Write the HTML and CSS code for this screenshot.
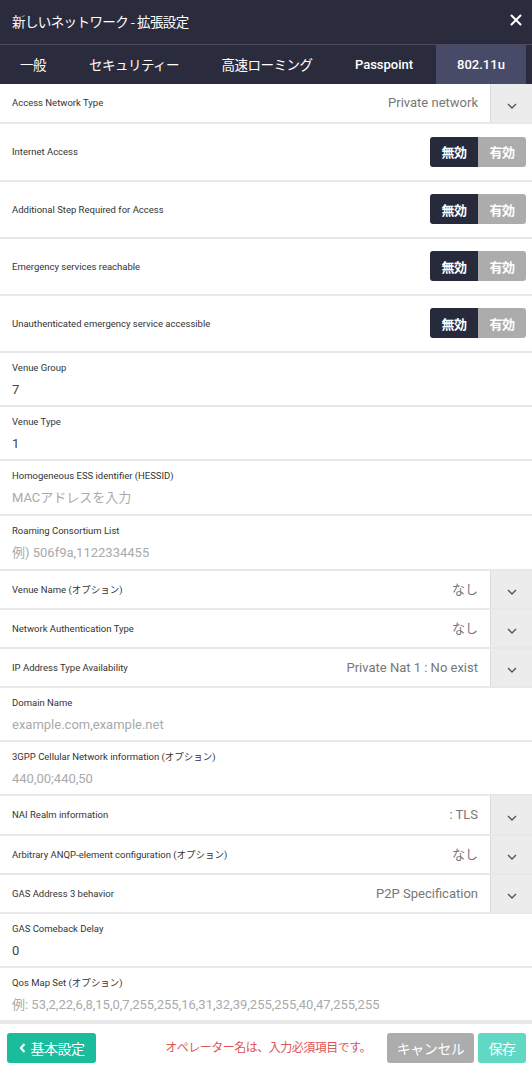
FILE: index.html
```html
<!DOCTYPE html>
<html lang="ja">
<head>
<meta charset="utf-8">
<link rel="stylesheet" href="styles.css">
</head>
<body>
<div class="modal">
  <header class="header">
    <div class="title">新しいネットワーク - 拡張設定</div>
    <div class="close">
      <svg width="12" height="12" viewBox="0 0 12 12"><path d="M1.5 1.5 L10.5 10.5 M10.5 1.5 L1.5 10.5" stroke="#fff" stroke-width="2" stroke-linecap="round"/></svg>
    </div>
  </header>
  <nav class="tabs">
    <div class="tab t1">一般</div>
    <div class="tab t2">セキュリティー</div>
    <div class="tab t3">高速ローミング</div>
    <div class="tab t4 latin">Passpoint</div>
    <div class="tab t5 latin active">802.11u</div>
  </nav>
  <main class="body">
    <div class="row sel first">
      <div class="label">Access Network Type</div>
      <div class="val">Private network</div>
      <div class="btn"><svg width="10" height="6" viewBox="0 0 10 6"><path d="M1 1 L5 5 L9 1" fill="none" stroke="#555" stroke-width="1.4"/></svg></div>
    </div>
    <div class="row tog firsttog">
      <div class="label">Internet Access</div>
      <div class="toggle"><span class="off">無効</span><span class="on">有効</span></div>
    </div>
    <div class="row tog">
      <div class="label">Additional Step Required for Access</div>
      <div class="toggle"><span class="off">無効</span><span class="on">有効</span></div>
    </div>
    <div class="row tog">
      <div class="label">Emergency services reachable</div>
      <div class="toggle"><span class="off">無効</span><span class="on">有効</span></div>
    </div>
    <div class="row tog">
      <div class="label">Unauthenticated emergency service accessible</div>
      <div class="toggle"><span class="off">無効</span><span class="on">有効</span></div>
    </div>
    <div class="row inp">
      <div class="label">Venue Group</div>
      <div class="text">7</div>
    </div>
    <div class="row inp">
      <div class="label">Venue Type</div>
      <div class="text">1</div>
    </div>
    <div class="row inp tall">
      <div class="label">Homogeneous ESS identifier (HESSID)</div>
      <div class="text ph">MACアドレスを入力</div>
    </div>
    <div class="row inp tall">
      <div class="label">Roaming Consortium List</div>
      <div class="text ph">例) 506f9a,1122334455</div>
    </div>
    <div class="row sel">
      <div class="label">Venue Name (オプション)</div>
      <div class="val">なし</div>
      <div class="btn"><svg width="10" height="6" viewBox="0 0 10 6"><path d="M1 1 L5 5 L9 1" fill="none" stroke="#555" stroke-width="1.4"/></svg></div>
    </div>
    <div class="row sel">
      <div class="label">Network Authentication Type</div>
      <div class="val">なし</div>
      <div class="btn"><svg width="10" height="6" viewBox="0 0 10 6"><path d="M1 1 L5 5 L9 1" fill="none" stroke="#555" stroke-width="1.4"/></svg></div>
    </div>
    <div class="row sel">
      <div class="label">IP Address Type Availability</div>
      <div class="val">Private Nat 1 : No exist</div>
      <div class="btn"><svg width="10" height="6" viewBox="0 0 10 6"><path d="M1 1 L5 5 L9 1" fill="none" stroke="#555" stroke-width="1.4"/></svg></div>
    </div>
    <div class="row inp">
      <div class="label">Domain Name</div>
      <div class="text ph">example.com,example.net</div>
    </div>
    <div class="row inp">
      <div class="label">3GPP Cellular Network information (オプション)</div>
      <div class="text ph">440,00;440,50</div>
    </div>
    <div class="row sel sel40">
      <div class="label">NAI Realm information</div>
      <div class="val">: TLS</div>
      <div class="btn"><svg width="10" height="6" viewBox="0 0 10 6"><path d="M1 1 L5 5 L9 1" fill="none" stroke="#555" stroke-width="1.4"/></svg></div>
    </div>
    <div class="row sel">
      <div class="label">Arbitrary ANQP-element configuration (オプション)</div>
      <div class="val">なし</div>
      <div class="btn"><svg width="10" height="6" viewBox="0 0 10 6"><path d="M1 1 L5 5 L9 1" fill="none" stroke="#555" stroke-width="1.4"/></svg></div>
    </div>
    <div class="row sel">
      <div class="label">GAS Address 3 behavior</div>
      <div class="val">P2P Specification</div>
      <div class="btn"><svg width="10" height="6" viewBox="0 0 10 6"><path d="M1 1 L5 5 L9 1" fill="none" stroke="#555" stroke-width="1.4"/></svg></div>
    </div>
    <div class="row inp">
      <div class="label">GAS Comeback Delay</div>
      <div class="text">0</div>
    </div>
    <div class="row inp">
      <div class="label">Qos Map Set (オプション)</div>
      <div class="text ph">例: 53,2,22,6,8,15,0,7,255,255,16,31,32,39,255,255,40,47,255,255</div>
    </div>
  </main>
  <footer class="footer">
    <button class="b back"><svg width="7" height="10" viewBox="0 0 7 10"><path d="M5.5 1 L1.8 5 L5.5 9" fill="none" stroke="#fff" stroke-width="2"/></svg>基本設定</button>
    <div class="err">オペレーター名は、入力必須項目です。</div>
    <button class="b cancel">キャンセル</button>
    <button class="b save">保存</button>
  </footer>
</div>
</body>
</html>
```

FILE: styles.css
```css
* { box-sizing: border-box; }
html, body { margin: 0; padding: 0; }
body {
  width: 532px;
  height: 1068px;
  background: #fff;
  font-family: Roboto, "Noto Sans CJK JP", sans-serif;
  overflow: hidden;
}
.modal { width: 532px; display: flex; flex-direction: column; }
.header {
  height: 45px;
  background: #2a2c3d;
  border-bottom: 1px solid #4b4d5e;
  display: flex;
  align-items: center;
  justify-content: space-between;
  padding: 0 10px 0 12px;
}
.title {
  color: #fff;
  font-family: "Noto Sans CJK JP", sans-serif;
  font-size: 13.5px;
  letter-spacing: -0.6px;
  margin-top: -2px;
}
.close { display: flex; align-items: center; width: 12px; height: 12px; margin-top: -4px; }
.tabs {
  height: 39px;
  background: #2a2c3d;
  display: flex;
  padding-right: 6px;
}
.tab {
  color: #fff;
  font-family: "Noto Sans CJK JP", sans-serif;
  font-size: 13.5px;
  letter-spacing: -0.5px;
  display: flex;
  align-items: center;
  justify-content: center;
  padding-bottom: 2px;
}
.tab.latin { font-family: Roboto, sans-serif; font-weight: 500; font-size: 13px; letter-spacing: 0; padding-bottom: 0; }
.t1 { width: 66px; }
.t2 { width: 136px; }
.t3 { width: 130px; }
.t4 { width: 104px; }
.t5 { width: 90px; }
.tab.active { background: #484b67; }

.body { display: flex; flex-direction: column; }
.row {
  border-bottom: 2px solid #e8e8e8;
  display: flex;
  align-items: center;
  padding-left: 12px;
}
.label {
  font-size: 9.5px;
  line-height: 12px;
  color: #333;
  font-family: Roboto, "Noto Sans CJK JP", sans-serif;
}
.row.sel { height: 39px; }
.row.sel.first { height: 40px; }
.row.sel40 { height: 40px; }
.row.sel .label { flex: 1; }
.val {
  font-size: 13px;
  line-height: 16px;
  color: #777;
  padding-right: 12px;
  font-family: Roboto, "Noto Sans CJK JP", sans-serif;
}
.btn {
  width: 42px;
  align-self: stretch;
  background: #ececec;
  border-left: 1px solid #dcdcdc;
  display: flex;
  align-items: center;
  justify-content: center;
  padding-top: 5px;
}
.row.tog { height: 57px; justify-content: space-between; padding-right: 6px; }
.row.tog.firsttog { height: 58px; }
.toggle {
  display: flex;
  height: 30px;
  border-radius: 3px;
  overflow: hidden;
  margin-top: -1px;
}
.toggle span {
  width: 48px;
  display: flex;
  align-items: center;
  justify-content: center;
  color: #fff;
  font-family: "Noto Sans CJK JP", sans-serif;
  font-weight: 700;
  font-size: 13px;
  letter-spacing: -0.5px;
}
.toggle .off { background: #272a3b; }
.toggle .on { background: #acacac; }
.row.inp {
  height: 54px;
  flex-direction: column;
  align-items: flex-start;
  justify-content: flex-start;
  padding-top: 9px;
}
.row.inp.tall { height: 55px; }
.row.inp .text {
  margin-top: 8px;
  font-size: 13px;
  line-height: 16px;
  color: #444;
  font-family: Roboto, "Noto Sans CJK JP", sans-serif;
}
.row.inp .text.ph { color: #aaa; }

.footer {
  border-top: 2px solid #e8e8e8;
  height: 47px;
  display: flex;
  align-items: center;
  padding: 0 6px 0 7px;
}
.b {
  border: none;
  height: 30px;
  border-radius: 3px;
  color: #fff;
  font-family: "Noto Sans CJK JP", sans-serif;
  font-size: 14px;
  letter-spacing: -0.5px;
  display: flex;
  align-items: center;
  justify-content: center;
  padding: 0;
  margin-top: 2px;
}
.back { width: 89px; background: #1abc9c; gap: 5px; }
.err {
  flex: 1;
  text-align: right;
  color: #e05555;
  font-family: "Noto Sans CJK JP", sans-serif;
  font-size: 12px;
  letter-spacing: -0.5px;
  padding-right: 16px;
}
.cancel { width: 87px; background: #acacac; }
.save { width: 48px; background: #60d8c4; margin-left: 4px; }
```
